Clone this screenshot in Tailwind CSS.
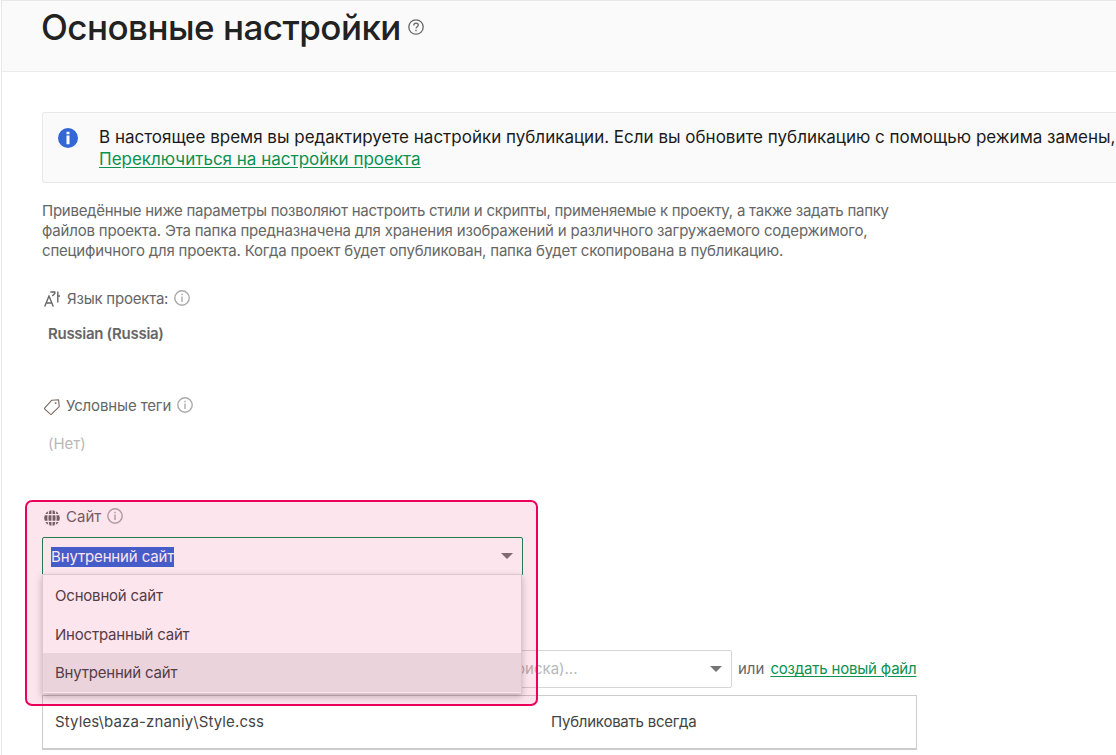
<!DOCTYPE html>
<html lang="ru">
  <head>
    <meta charset="UTF-8" />
    <meta name="viewport" content="width=device-width, initial-scale=1.0" />
    <title>Основные настройки</title>
    <script src="https://cdn.jsdelivr.net/npm/@tailwindcss/browser@4"></script>
  </head>

  <body class="h-[755px] overflow-hidden bg-white font-['Inter','Noto_Sans',sans-serif] text-[15px] leading-5 text-[#666] whitespace-nowrap">
    <div class="relative ml-px h-full border-t border-l border-[#e8e8e8]">
      <header class="flex h-[71px] items-start border-b border-[#ebebeb] bg-[#fafafa] pl-[39px]">
        <h1 class="pt-[3px] text-[35px] leading-[46px] font-medium tracking-[-0.53px] text-[#222]"><span>Основные настройки</span></h1>
        <svg class="mt-[18px] ml-[7px] size-4" viewBox="0 0 16 16" fill="none" stroke="#666" stroke-width="1.3">
          <circle cx="8" cy="8" r="7.2" />
          <path d="M5.8 6.4C5.8 3.4 10.3 3.5 10.3 6.1C10.3 7.7 8 7.8 8 9.6M8 10.8V12.3" />
        </svg>
      </header>

      <main class="flex flex-col pt-10 pl-10">
        <section class="flex h-[71px] rounded-l-[3px] border border-r-0 border-[#e8e8e8] bg-[#fafafa] pt-[13px] pl-[15px]">
          <svg class="mt-0.5 size-5 shrink-0" viewBox="0 0 20 20">
            <circle cx="10" cy="10" r="10" fill="#3367d6" />
            <path d="M10 3.8v2.4M10 7.6v8.6" stroke="#fff" stroke-width="3" />
          </svg>
          <div class="ml-[21px] text-[17px] leading-[22px] text-[#1a1a1a]">
            <p><span>В настоящее время вы редактируете настройки публикации. Если вы обновите публикацию с помощью режима замены,</span></p>
            <a href="#" class="text-[#0b9150] underline underline-offset-2">Переключиться на настройки проекта</a>
          </div>
        </section>

        <div class="mt-[18px]">
          <p class="tracking-[-0.26px]"><span>Приведённые ниже параметры позволяют настроить стили и скрипты, применяемые к проекту, а также задать папку</span></p>
          <p class="tracking-[-0.19px]"><span>файлов проекта. Эта папка предназначена для хранения изображений и различного загружаемого содержимого,</span></p>
          <p class="tracking-[-0.19px]"><span>специфичного для проекта. Когда проект будет опубликован, папка будет скопирована в публикацию.</span></p>
        </div>

        <section class="mt-7 h-[107px]">
          <div class="flex h-5 items-center">
            <svg class="mr-[7px] ml-0.5 size-4" viewBox="0 0 16 16" fill="none" stroke="#666" stroke-width="1.4">
              <path d="M.7 15.5L5 5L9.3 15.5M2.2 12H7.8M6.3 1H10.8V2.5L8.3 5M13.8 .5V11.5M13.8 5H16" />
            </svg>
            <span class="tracking-[-0.22px]">Язык проекта:</span>
            <svg class="-mt-0.5 ml-1.5 size-4" viewBox="0 0 16 16" fill="none" stroke="#aaa" stroke-width="1.4">
              <circle cx="8" cy="8" r="7.2" />
              <path d="M8 3.8V5.2M8 6.6V12" />
            </svg>
          </div>
          <p class="mt-[15px] ml-1.5 font-semibold tracking-[-0.29px]"><span>Russian (Russia)</span></p>
        </section>

        <section class="h-[111px]">
          <div class="flex h-5 items-center">
            <svg class="mt-0.5 mr-1.5 ml-0.5 size-4" viewBox="0 0 16 16" fill="none" stroke="#7a675d" stroke-width="1.1" stroke-linejoin="round">
              <path d="M.6 9.2L7.8 1.2L14.6 .8L15.2 7.6L7.6 15.2Q7 15.7 6.4 15.2L.8 10.2Q.2 9.7 .6 9.2Z" />
              <path d="M11.6 3.3V4.9" stroke-width="1.5" />
            </svg>
            <span class="tracking-[-0.13px]">Условные теги</span>
            <svg class="-mt-0.5 ml-1.5 size-4" viewBox="0 0 16 16" fill="none" stroke="#aaa" stroke-width="1.4">
              <circle cx="8" cy="8" r="7.2" />
              <path d="M8 3.8V5.2M8 6.6V12" />
            </svg>
          </div>
          <p class="mt-[18px] ml-1.5 text-[#b8b8b8]"><span>(Нет)</span></p>
        </section>

        <section class="h-[143px]">
          <div class="flex h-5 items-center">
            <svg class="mt-0.5 mr-1.5 ml-0.5 size-4" viewBox="0 0 16 16">
              <circle cx="8" cy="8" r="7.8" fill="#666" />
              <path d="M8 0V16M0 4.6H16M0 11.4H16M5 0Q2.8 8 5 16M11 0Q13.2 8 11 16" fill="none" stroke="#fff" stroke-width="1.1" />
            </svg>
            <span>Сайт</span>
            <svg class="-mt-0.5 ml-1.5 size-4" viewBox="0 0 16 16" fill="none" stroke="#aaa" stroke-width="1.4">
              <circle cx="8" cy="8" r="7.2" />
              <path d="M8 3.8V5.2M8 6.6V12" />
            </svg>
          </div>
          <div class="relative mt-2.5 flex h-[38px] w-[481px] items-center justify-between rounded-t-xs border border-[#0b8a4c] bg-white pr-[9px] pl-2">
            <span class="mt-0.5 h-5 bg-[#3367d6] tracking-[-0.14px] text-white">Внутренний сайт</span>
            <svg class="h-1.5 w-3" viewBox="0 0 12 6"><path d="M0 0H12L6 6Z" fill="#757575" /></svg>
            <ul class="absolute top-[36px] -left-px z-10 h-[120px] w-[480px] border border-[#ddd] bg-white pt-0.5 tracking-[-0.2px] text-[#444] shadow-[0_3px_7px_rgba(0,0,0,.25)]">
              <li class="flex h-[38px] items-center pl-3"><span>Основной сайт</span></li>
              <li class="flex h-[38px] items-center pt-px pl-3"><span>Иностранный сайт</span></li>
              <li class="flex h-[39px] items-center bg-[#ebebeb] pl-3"><span>Внутренний сайт</span></li>
            </ul>
          </div>
        </section>

        <div class="flex h-[38px] items-center">
          <div class="flex h-[38px] w-[690px] items-center justify-end rounded-xs border border-[#d6d6d6] pr-[9.5px] text-[#b8b8b8]">
            <span>(введите текст для поиска)...</span>
            <svg class="ml-[132px] h-1.5 w-3" viewBox="0 0 12 6"><path d="M0 0H12L6 6Z" fill="#757575" /></svg>
          </div>
          <span class="ml-1.5">или</span>
          <a href="#" class="ml-1.5 tracking-[-0.19px] text-[#0b9150] underline underline-offset-2">создать новый файл</a>
        </div>

        <div class="mt-[7px] flex h-[55px] w-[875px] items-center border border-b-2 border-[#ccc] pl-3 text-[#444]">
          <div class="w-[496px] tracking-[0.11px]"><span>Styles\baza-znaniy\Style.css</span></div>
          <div class="tracking-[-0.24px]"><span>Публиковать всегда</span></div>
        </div>
      </main>

      <!-- Callout frame drawn over the site field -->
      <div class="pointer-events-none absolute top-[498.5px] left-[23px] z-20 h-[206px] w-[513px] rounded-[7px] border-2 border-[#eb005c] bg-[#f0005c]/10"></div>
    </div>
  </body>
</html>
